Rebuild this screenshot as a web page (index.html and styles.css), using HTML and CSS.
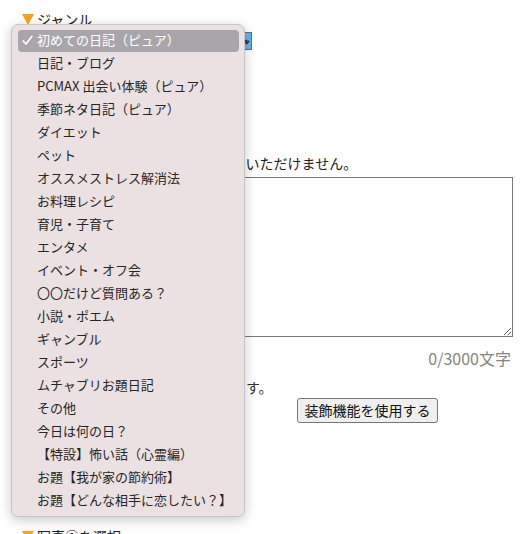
FILE: index.html
```html
<!DOCTYPE html>
<html lang="ja">
<head>
<meta charset="utf-8">
<link rel="stylesheet" href="styles.css">
</head>
<body>
<div class="page">
  <h3 class="heading"><span class="tri"></span>ジャンル</h3>
  <div class="selectbox"><span class="sel-value">初めての日記（ピュア）</span><span class="sel-arrow"><svg class="sel-icon" width="8" height="10" viewBox="0 0 8 10"><path d="M1 7 L4 4 M3 8 L6 5" stroke="#1a1a1a" stroke-width="1.6" fill="none"/></svg></span></div>
  <p class="note">※公序良俗に反する内容は掲載していただけません。</p>
  <textarea class="body-text"></textarea>
  <div class="counter">0/3000文字</div>
  <p class="note2">※文字の色や太さなどを変更できます。</p>
  <div class="btn-row"><button class="deco-btn">装飾機能を使用する</button></div>
  <h3 class="heading heading-photo"><span class="tri"></span>写真①を選択</h3>
</div>

<div class="popup">
  <div class="item selected"><span class="check"><svg width="11" height="11" viewBox="0 0 11 11"><path d="M1.2 6 L4 9 L9.8 1.5" stroke="#ffffff" stroke-width="1.7" fill="none" stroke-linecap="round" stroke-linejoin="round"/></svg></span>初めての日記（ピュア）</div>
  <div class="item"><span class="check"></span>日記・ブログ</div>
  <div class="item"><span class="check"></span>PCMAX 出会い体験（ピュア）</div>
  <div class="item"><span class="check"></span>季節ネタ日記（ピュア）</div>
  <div class="item"><span class="check"></span>ダイエット</div>
  <div class="item"><span class="check"></span>ペット</div>
  <div class="item"><span class="check"></span>オススメストレス解消法</div>
  <div class="item"><span class="check"></span>お料理レシピ</div>
  <div class="item"><span class="check"></span>育児・子育て</div>
  <div class="item"><span class="check"></span>エンタメ</div>
  <div class="item"><span class="check"></span>イベント・オフ会</div>
  <div class="item"><span class="check"></span>〇〇だけど質問ある？</div>
  <div class="item"><span class="check"></span>小説・ポエム</div>
  <div class="item"><span class="check"></span>ギャンブル</div>
  <div class="item"><span class="check"></span>スポーツ</div>
  <div class="item"><span class="check"></span>ムチャブリお題日記</div>
  <div class="item"><span class="check"></span>その他</div>
  <div class="item"><span class="check"></span>今日は何の日？</div>
  <div class="item"><span class="check"></span>【特設】怖い話（心霊編）</div>
  <div class="item"><span class="check"></span>お題【我が家の節約術】</div>
  <div class="item"><span class="check"></span>お題【どんな相手に恋したい？】</div>
</div>
</body>
</html>
```
FILE: styles.css
```css
html, body {
  margin: 0;
  padding: 0;
  background: #ffffff;
  overflow: hidden;
}
body {
  font-family: "Noto Sans CJK JP", "Noto Sans", sans-serif;
  color: #222222;
  font-size: 14px;
  width: 527px;
  height: 534px;
  position: relative;
}
.page {
  padding: 10px 14px 0 22px;
}
.heading {
  margin: 0;
  font-size: 14px;
  font-weight: normal;
  line-height: 19px;
  display: flex;
  align-items: center;
}
.tri {
  display: inline-block;
  width: 0;
  height: 0;
  border-left: 6px solid transparent;
  border-right: 6px solid transparent;
  border-top: 11px solid #f5a31a;
  margin-right: 3px;
}
.selectbox {
  margin-top: 3px;
  width: 230px;
  height: 18px;
  box-sizing: border-box;
  border: 1px solid #6b6b6b;
  display: flex;
  background: #ffffff;
  font-size: 12px;
  line-height: 16px;
}
.sel-value {
  flex: 1;
  padding-left: 4px;
}
.sel-arrow {
  width: 16px;
  background: #64b5f4;
  border-left: 1px solid #4a8fcc;
  display: flex;
  align-items: center;
  justify-content: flex-end;
}
.sel-icon {
  display: block;
}
.note {
  margin: 103px 0 0 0;
  line-height: 20px;
  white-space: nowrap;
}
.body-text {
  display: block;
  margin-top: 4px;
  width: 100%;
  height: 160px;
  box-sizing: border-box;
  border: 1px solid #7a7a7a;
  resize: vertical;
  font-family: inherit;
}
.counter {
  margin-top: 11px;
  text-align: right;
  color: #858585;
  font-size: 16px;
  line-height: 20px;
  padding-right: 2px;
}
.note2 {
  margin: 9px 0 0 0;
  line-height: 20px;
  white-space: nowrap;
  color: #333333;
  font-size: 14px;
}
.btn-row {
  margin-top: 1px;
  padding-left: 275px;
}
.deco-btn {
  font-family: inherit;
  font-size: 14px;
  height: 25px;
  width: 141px;
  padding: 0 6px;
  line-height: 23px;
  background: #efefef;
  border: 1px solid #767676;
  border-radius: 3px;
  color: #111111;
}
.heading-photo {
  margin-top: 104px;
}
.popup {
  position: absolute;
  left: 11px;
  top: 24px;
  width: 234px;
  height: 493px;
  box-sizing: border-box;
  padding: 4.5px 5px 0 6px;
  background: #ebe1e2;
  border: 1px solid #c9c4c5;
  border-radius: 7px;
  box-shadow: 0 3px 12px rgba(0, 0, 0, 0.22);
  font-size: 13px;
}
.item {
  height: 23px;
  box-sizing: border-box;
  padding-bottom: 3px;
  line-height: 20px;
  display: flex;
  align-items: center;
  white-space: nowrap;
  color: #262626;
}
.item.selected {
  background: #a9a6ab;
  color: #ffffff;
  border-radius: 4px;
  height: 22px;
  padding-bottom: 1px;
  margin-bottom: 1px;
}
.check {
  display: inline-flex;
  align-items: center;
  width: 15px;
  padding-left: 4px;
  box-sizing: content-box;
}
```
